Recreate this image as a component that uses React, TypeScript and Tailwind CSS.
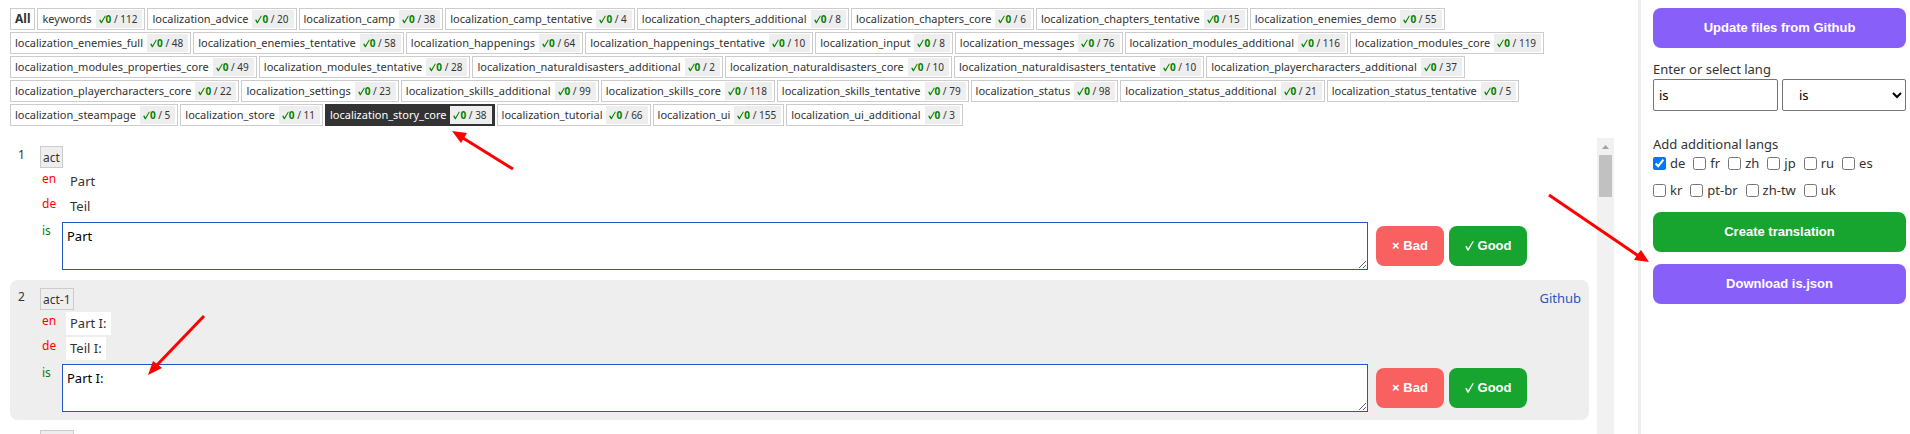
import { useState } from "react";

type FileEntry = [name: string, total: number];

const files: FileEntry[] = [
  ["keywords", 112],
  ["localization_advice", 20],
  ["localization_camp", 38],
  ["localization_camp_tentative", 4],
  ["localization_chapters_additional", 8],
  ["localization_chapters_core", 6],
  ["localization_chapters_tentative", 15],
  ["localization_enemies_demo", 55],
  ["localization_enemies_full", 48],
  ["localization_enemies_tentative", 58],
  ["localization_happenings", 64],
  ["localization_happenings_tentative", 10],
  ["localization_input", 8],
  ["localization_messages", 76],
  ["localization_modules_additional", 116],
  ["localization_modules_core", 119],
  ["localization_modules_properties_core", 49],
  ["localization_modules_tentative", 28],
  ["localization_naturaldisasters_additional", 2],
  ["localization_naturaldisasters_core", 10],
  ["localization_naturaldisasters_tentative", 10],
  ["localization_playercharacters_additional", 37],
  ["localization_playercharacters_core", 22],
  ["localization_settings", 23],
  ["localization_skills_additional", 99],
  ["localization_skills_core", 118],
  ["localization_skills_tentative", 79],
  ["localization_status", 98],
  ["localization_status_additional", 21],
  ["localization_status_tentative", 5],
  ["localization_steampage", 5],
  ["localization_store", 11],
  ["localization_story_core", 38],
  ["localization_tutorial", 66],
  ["localization_ui", 155],
  ["localization_ui_additional", 3],
];

interface Entry {
  key: string;
  en: string;
  de: string;
  is: string;
  github?: boolean;
}

const entries: Entry[] = [
  { key: "act", en: "Part", de: "Teil", is: "Part" },
  { key: "act-1", en: "Part I:", de: "Teil I:", is: "Part I:", github: true },
  { key: "act-2", en: "Part II:", de: "Teil II:", is: "Part II:" },
];

const langs = ["de", "fr", "zh", "jp", "ru", "es", "kr", "pt-br", "zh-tw", "uk"];

function CheckMark({ className }: { className: string }) {
  return (
    <svg viewBox="0 0 9 10" className={className} fill="currentColor" aria-hidden="true">
      <path d="M0.2 5.6 L1.7 5.1 L3.1 7.6 L7.6 0.2 L8.9 0.2 L3.5 9.8 L2.5 9.8 Z" />
    </svg>
  );
}

function FileTab({ name, total, active, onClick }: { name: string; total: number; active: boolean; onClick: () => void }) {
  return (
    <button
      type="button"
      onClick={onClick}
      className={
        active
          ? "flex h-[22px] items-center gap-1 border border-[#333] bg-[#333] pr-0.5 pl-1 text-white"
          : "flex h-[22px] items-center gap-1 border border-[#ccc] bg-white pr-0.5 pl-1"
      }
    >
      <span>{name}</span>
      <span className="flex h-[18px] items-center bg-[#eee] pr-[5px] pl-[3px] text-[10px] whitespace-pre text-[#333]">
        <CheckMark className="h-[9px] w-[7px] text-[#008000]" />
        <b className="text-[#008000]">0</b> / {total}
      </span>
    </button>
  );
}

function Source({ lang, text }: { lang: string; text: string }) {
  return (
    <div className="mt-0.5 flex h-[23px]">
      <span className="w-6 pl-0.5 text-xs leading-[18px] text-[#f00]">{lang}</span>
      <span className="ml-0.5 bg-white px-1 text-[13px] leading-[22px]">{text}</span>
    </div>
  );
}

function EntryRow({ entry, index }: { entry: Entry; index: number }) {
  const id = `translation-${index}`;
  return (
    <article
      className={
        index % 2 === 0
          ? "mr-2 flex shrink-0 rounded-lg bg-[#eee] p-2"
          : "mr-2 flex shrink-0 rounded-lg bg-white p-2"
      }
    >
      <span className="w-[22px] text-xs leading-[18px]">{index}</span>
      <div className="min-w-0 grow">
        <div className="flex h-[22px] items-start justify-between">
          <span className="h-[22px] border border-[#ccc] bg-[#eee] px-0.5 text-xs leading-[22px]">{entry.key}</span>
          {entry.github && (
            <a href="#github" className="text-[13px] leading-5 text-[#2457c5]">
              Github
            </a>
          )}
        </div>
        <Source lang="en" text={entry.en} />
        <Source lang="de" text={entry.de} />
        <div className="mt-1 flex">
          <label htmlFor={id} className="w-[22px] pl-0.5 text-xs leading-[18px] text-[#008000]">
            is
          </label>
          <textarea
            id={id}
            defaultValue={entry.is}
            className="block h-12 grow border border-[#2457c5] bg-white p-1 text-[13px] leading-[18px] text-black outline-none"
          />
          <div className="mt-1 flex w-[213px] gap-[5px] pl-2 font-['Liberation_Sans',sans-serif] text-[13px] font-bold text-white">
            <button type="button" className="h-10 w-[68px] rounded-lg bg-[#f96060]">
              × Bad
            </button>
            <button type="button" className="flex h-10 w-[78px] items-center justify-center gap-1 rounded-lg bg-[#18a52f]">
              <CheckMark className="h-2.5 w-[9px]" />
              Good
            </button>
          </div>
        </div>
      </div>
    </article>
  );
}

function Arrows() {
  return (
    <svg className="pointer-events-none absolute top-0 left-0 h-[434px] w-[1910px]" viewBox="0 0 1910 434" fill="#f00" stroke="#f00" aria-hidden="true">
      <g strokeWidth="3">
        <path d="M513 169 L463 138" />
        <path d="M204 316 L156 366" />
        <path d="M1549 195 L1640 257" />
      </g>
      <g stroke="none">
        <path d="M452 131 L467 133 L464 138 L461 143 Z" />
        <path d="M148 375 L153 361 L157 364 L162 368 Z" />
        <path d="M1649 262 L1634 260 L1637 255 L1641 250 Z" />
      </g>
    </svg>
  );
}

export default function App() {
  const [active, setActive] = useState("localization_story_core");
  return (
    <div className="relative flex h-screen overflow-hidden bg-white font-['Noto_Sans','Open_Sans',sans-serif] text-[#333]">
      <main className="flex min-w-0 grow flex-col pl-2.5">
        <nav className="mr-12 flex flex-wrap gap-0.5 pt-2 text-[11px]">
          <button type="button" className="h-[22px] border border-[#ccc] px-1 text-xs leading-5 font-bold">
            All
          </button>
          {files.map(([name, total]) => (
            <FileTab key={name} name={name} total={total} active={name === active} onClick={() => setActive(name)} />
          ))}
        </nav>
        <div className="mt-3 mr-6 flex min-h-0 grow">
          <section className="flex min-w-0 grow flex-col gap-0.5 overflow-hidden">
            {entries.map((entry, i) => (
              <EntryRow key={entry.key} entry={entry} index={i + 1} />
            ))}
          </section>
          <div className="flex w-[17px] flex-col items-center bg-[#f1f1f1]" aria-hidden="true">
            <svg viewBox="0 0 17 17" className="h-[17px] w-[17px] shrink-0" fill="#a3a3a3">
              <path d="M5 11 L8.5 7 L12 11 Z" />
            </svg>
            <div className="h-[42px] w-[13px] bg-[#c1c1c1]" />
          </div>
        </div>
      </main>
      <aside className="w-[272px] shrink-0 border-l-[3px] border-[#eee] pt-2 pr-1 pl-3 text-[13px]">
        <button type="button" className="h-10 w-full rounded-lg bg-[#895ffa] font-['Liberation_Sans',sans-serif] font-bold text-white">
          Update files from Github
        </button>
        <label htmlFor="lang" className="mt-3 block leading-[19px]">
          Enter or select lang
        </label>
        <div className="flex gap-1 text-black">
          <input id="lang" defaultValue="is" className="h-8 w-[125px] rounded-xs border border-[#767676] px-[5px]" />
          <select aria-label="Select lang" defaultValue="is" className="h-8 grow rounded-xs border border-[#767676] bg-white px-3">
            <option>is</option>
            <option>de</option>
            <option>fr</option>
          </select>
        </div>
        <fieldset className="mt-6">
          <legend className="leading-[19px]">Add additional langs</legend>
          <div className="flex flex-wrap gap-x-2">
            {langs.map((lang) => (
              <label key={lang} className="flex h-[27px] items-start gap-1 leading-[18px]">
                <input type="checkbox" defaultChecked={lang === "de"} className="mt-[3px] h-[13px] w-[13px]" />
                {lang}
              </label>
            ))}
          </div>
        </fieldset>
        <div className="mt-1 flex flex-col gap-3 font-['Liberation_Sans',sans-serif] font-bold text-white">
          <button type="button" className="h-10 rounded-lg bg-[#18a52f]">
            Create translation
          </button>
          <button type="button" className="h-10 rounded-lg bg-[#895ffa]">
            Download is.json
          </button>
        </div>
      </aside>
      <Arrows />
    </div>
  );
}
